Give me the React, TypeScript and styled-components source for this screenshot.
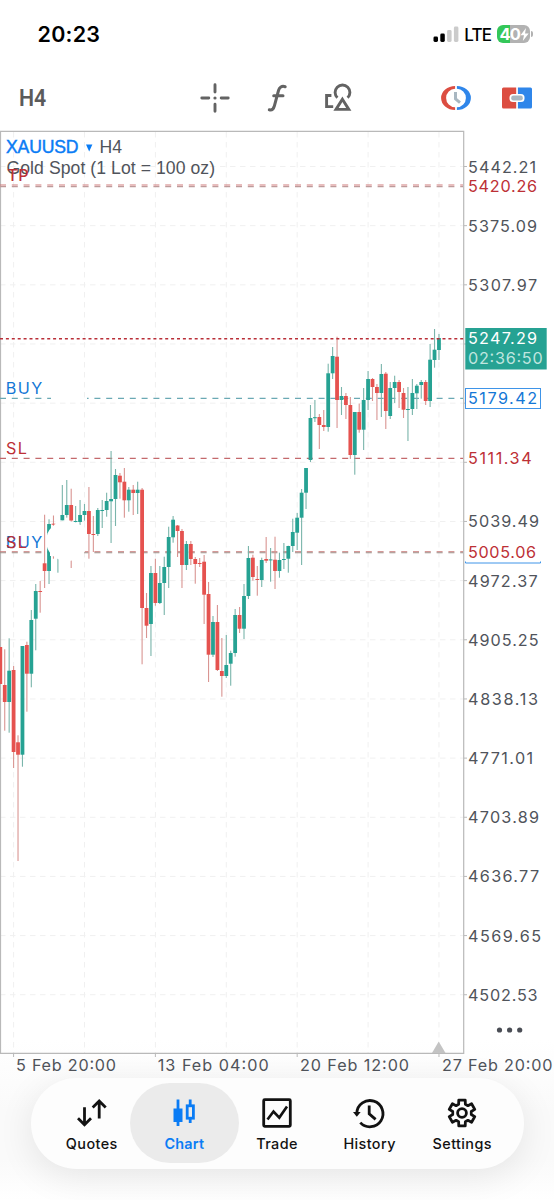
import React from "react";
import styled, { createGlobalStyle } from "styled-components";

const GlobalStyle = createGlobalStyle`
  * { box-sizing: border-box; }
  body { margin: 0; background: #fff; }
  #root { width: 554px; }
`;

const colors = {
  up: "#26a293",
  down: "#e5524f",
  upWick: "#7ab5ab",
  downWick: "#d99592",
  grid: "#f0f0f0",
  frame: "#b9b9b9",
  label: "#50545b",
  red: "#bd3036",
  blue: "#1377d6",
  accent: "#0a7cf5",
  icon: "#636363",
};

const Screen = styled.main`
  width: 554px;
  height: 1200px;
  display: flex;
  flex-direction: column;
  overflow: hidden;
  font-family: Inter, "Liberation Sans", sans-serif;
  background: linear-gradient(#fff 1040px, #fafafa 1110px, #fafafa 1160px, #fff 1200px);
`;

const StatusBar = styled.header`
  height: 68px;
  flex: none;
  display: flex;
  align-items: center;
  padding: 0 21px 0 37.5px;
`;

const Clock = styled.span`
  flex: 1;
  font-size: 21.5px;
  font-weight: 600;
  letter-spacing: 0.25px;
  color: #000;
`;

const Network = styled.span`
  font-size: 17px;
  font-weight: 500;
  letter-spacing: -0.9px;
  margin: 1px 6px 0 5px;
`;

const Battery = styled.div`
  position: relative;
  width: 33px;
  height: 18px;
  border-radius: 6px;
  background: linear-gradient(90deg, #34c759 40%, #b2b2b2 40%);
  display: flex;
  align-items: center;
  padding-left: 2.5px;
  margin-right: 3px;
  color: #fff;
  font-size: 16.5px;
  font-weight: 700;
  letter-spacing: -0.8px;

  &::after {
    content: "";
    position: absolute;
    right: -3px;
    top: 6px;
    width: 2px;
    height: 6px;
    border-radius: 0 2px 2px 0;
    background: #b2b2b2;
  }
`;

const Toolbar = styled.div`
  height: 62px;
  flex: none;
  display: flex;
  align-items: center;
  padding: 0 21px 3px 19px;
`;

const Timeframe = styled.span`
  width: 180px;
  font-family: Roboto, sans-serif;
  font-size: 24.5px;
  font-weight: 600;
  color: #5b5b5b;

  span {
    display: inline-block;
    transform: scaleX(0.87);
    transform-origin: left;
  }
`;

const ToolIcon = styled.svg<{ $gap?: string }>`
  width: 32px;
  height: 32px;
  flex: none;
  margin-left: ${(p) => p.$gap ?? "0"};
  fill: none;
  stroke: ${colors.icon};
`;

const ChartCanvas = styled.svg`
  display: block;
  flex: none;
  width: 554px;
  height: 948px;
`;

const TabBar = styled.nav`
  flex: none;
  height: 91px;
  margin: 0 30.5px;
  padding: 5px 6px;
  border-radius: 46px;
  background: #fdfdfd;
  box-shadow: 0 8px 36px rgba(0, 0, 0, 0.09);
  display: flex;
  justify-content: center;
`;

const Tab = styled.button<{ $active?: boolean }>`
  width: 109px;
  height: 80px;
  flex: none;
  margin: 0 -8.2px;
  padding: 13px 0 0;
  border: 0;
  border-radius: 40px;
  background: ${(p) => (p.$active ? "#ebebeb" : "transparent")};
  color: ${(p) => (p.$active ? colors.accent : "#121212")};
  display: flex;
  flex-direction: column;
  align-items: center;
  font: ${(p) => (p.$active ? 600 : 500)} 14.4px Inter, sans-serif;
  letter-spacing: ${(p) => (p.$active ? "0.2px" : "0.4px")};

  svg {
    width: 34px;
    height: 34px;
    margin-bottom: 5.4px;
    fill: none;
    stroke: currentColor;
    stroke-width: 2.8;
  }
`;

type Candle = [number, number, number, number, 0 | 1];

/* [high, body top, body bottom, low, rising], one entry every four hours */
const candles: Candle[] = [
  [647, 647, 684, 684, 0], [649.3, 685, 702, 730.7, 0], [638.3, 670.7, 702, 732.7, 1],
  [666, 670, 752, 768, 0], [735.3, 742.3, 754.7, 861, 0], [646, 646, 754.7, 766.7, 1],
  [641.7, 645, 673.7, 711.7, 0], [610, 620, 673.7, 687.3, 1], [584, 591, 618.7, 650.3, 1],
  [581, 591, 592, 612.7, 0], [514.7, 563.3, 571, 588, 0], [519.3, 524, 571, 584, 1],
  [515.5, 523.7, 524.7, 558.7, 0], [530, 535, 550, 572.7, 1], [485, 515, 520.3, 520.3, 1],
  [480, 505, 515, 517.6, 1], [488.7, 505, 520.5, 568, 0], [506, 521, 522, 522.5, 1],
  [500, 515, 522, 525, 1], [504, 511, 515, 520.7, 1], [487, 511, 534, 558.7, 0],
  [516, 534, 535, 552, 0], [508, 510, 534, 536, 1], [500, 510, 511, 528, 1],
  [492.7, 501, 510, 516.7, 1], [451, 499, 501.3, 543, 1], [469, 475, 499, 526, 1],
  [473, 475.7, 482.3, 498.7, 0], [468, 481.7, 500.3, 517.7, 0], [487, 489.7, 500.3, 511.7, 1],
  [485, 489.7, 493, 515, 0], [481.7, 489.7, 493, 514, 1], [488, 489.7, 608, 664.3, 0],
  [593, 608, 625.7, 638, 0], [566, 573, 624, 656, 1], [558.7, 573, 603, 605.7, 0],
  [566, 583, 603, 604, 1], [556.7, 567, 583, 615, 1], [526.7, 537, 567, 588, 1],
  [516, 519.7, 537.3, 542.7, 1], [525, 525.5, 531, 557, 0], [529, 531, 565, 588, 0],
  [541, 544, 565, 570, 1], [541, 544, 559, 565, 0], [557, 559, 564, 583.7, 0],
  [558, 563, 564, 567, 0], [555, 561.7, 594.7, 624, 0], [582, 594, 654.7, 682, 0],
  [616, 622, 654.7, 657, 1], [605, 622, 670, 671, 0], [638, 671, 676, 696.7, 0],
  [635, 665, 676, 678, 1], [650.7, 653, 663.7, 685.7, 1], [609, 615, 653, 656.7, 1],
  [607, 615, 628.7, 633, 0], [584, 596, 628.7, 639, 1], [546, 558, 596, 599, 1],
  [554.7, 557.7, 577, 580.7, 0], [566, 579, 580, 595.7, 0], [557.7, 560, 580, 587, 1],
  [537, 559, 560.7, 563, 0], [548, 559.4, 560.2, 581.7, 1], [536.7, 559.7, 571, 589, 0],
  [552.7, 560, 571, 577.7, 1], [543, 559, 560, 569, 1], [545.7, 546, 558.7, 572.7, 1],
  [518.7, 532, 546, 552, 1], [513, 517.7, 532.7, 550, 1], [489, 492.7, 517.7, 565, 1],
  [468, 468, 492.7, 509, 1], [405, 418, 460, 462, 1], [400, 417.2, 418.2, 422, 1],
  [414, 417, 425, 449, 0], [410, 425, 427, 431, 0], [363.7, 373.3, 427, 431.7, 1],
  [347, 356, 373.3, 379, 1], [336.7, 356.7, 400, 428, 0], [387, 396, 400, 415, 1],
  [393, 396, 405, 419, 0], [397, 405, 455, 459, 0], [412, 412, 455, 474.7, 1],
  [403.5, 412, 429.7, 432.7, 0], [388, 400, 429.7, 450, 1], [371, 379, 400, 410, 1],
  [378, 379, 387, 401, 0], [384, 387, 393, 420, 0], [364, 374, 393, 417, 1],
  [372, 373.7, 411, 429, 0], [382, 388, 416, 419, 1], [375.7, 382, 388, 403, 1],
  [380, 382, 392, 408, 0], [388, 393, 409.7, 418, 0], [387, 409, 410, 441, 1],
  [379, 393, 409, 415, 1], [384, 385.7, 393.3, 409, 1], [380, 382, 385, 398.7, 1],
  [380, 382, 401, 405, 0], [344, 359.7, 401, 407, 1], [329, 349.7, 360, 367.7, 1],
  [334, 338, 350, 360, 1],
];

const candleX = (i: number) => 0.3 + i * 4.431;

const gridX = [3, 19, 35, 51, 67, 83, 99].map(candleX);
const gridY = Array.from({ length: 15 }, (_, i) => 166.5 + i * 59.16);

interface PriceLabel {
  text: string;
  y: number;
  width: number;
  color?: string;
}

const priceLabels: PriceLabel[] = [
  { text: "5442.21", y: 166.8, width: 67.5 },
  { text: "5420.26", y: 186, width: 68.5, color: colors.red },
  { text: "5375.09", y: 225.7, width: 68.5 },
  { text: "5307.97", y: 284.8, width: 68.5 },
  { text: "5247.29", y: 338.5, width: 68.5, color: "#fff" },
  { text: "02:36:50", y: 358, width: 74, color: "#bfe5df" },
  { text: "5179.42", y: 398.4, width: 68.5, color: colors.blue },
  { text: "5111.34", y: 458.3, width: 63, color: colors.red },
  { text: "5039.49", y: 521.5, width: 70.5 },
  { text: "5005.06", y: 552.2, width: 67.5, color: colors.red },
  { text: "4972.37", y: 580.6, width: 69 },
  { text: "4905.25", y: 639.8, width: 70 },
  { text: "4838.13", y: 699, width: 69.5 },
  { text: "4771.01", y: 758, width: 64.5 },
  { text: "4703.89", y: 817.2, width: 70.5 },
  { text: "4636.77", y: 876.4, width: 70.5 },
  { text: "4569.65", y: 935.6, width: 72.5 },
  { text: "4502.53", y: 994.7, width: 69 },
];

const timeLabels = [
  { text: "5 Feb 20:00", x: 16, width: 100 },
  { text: "13 Feb 04:00", x: 157.7, width: 111 },
  { text: "20 Feb 12:00", x: 300, width: 109 },
  { text: "27 Feb 20:00", x: 442, width: 110.5 },
];

const AxisText = styled.text`
  font: 400 16.2px Inter, sans-serif;
  fill: ${colors.label};
`;

const TitleText = styled.text`
  font-family: "Liberation Sans", Arial, sans-serif;
  font-size: 17.6px;
  fill: ${colors.label};
`;

function CandleShape({ data, x }: { data: Candle; x: number }) {
  const [high, top, bottom, low, rising] = data;
  return (
    <g>
      <rect x={x - 0.55} y={high} width={1.1} height={low - high} fill={rising ? colors.upWick : colors.downWick} />
      <rect x={x - 1.9} y={top} width={3.8} height={Math.max(bottom - top, 1)} fill={rising ? colors.up : colors.down} />
    </g>
  );
}

function Chart() {
  return (
    <ChartCanvas viewBox="0 130 554 948">
      <g stroke={colors.grid} strokeWidth={1} strokeDasharray="5.5 4.5">
        {gridY.map((y) => <line key={y} x1={0} x2={463} y1={y} y2={y} />)}
        {gridX.map((x) => <line key={x} x1={x} x2={x} y1={132} y2={1053} />)}
      </g>

      <path d="M0.5 1053V131.3H463.7V1053.3H0" fill="none" stroke={colors.frame} strokeWidth={1.2} />
      <g stroke={colors.frame}>
        {gridY.map((y) => <line key={y} x1={464} x2={467} y1={y} y2={y} />)}
        {gridX.filter((_, i) => i % 2 === 0).map((x) => <line key={x} x1={x} x2={x} y1={1053} y2={1057} />)}
      </g>

      <g fill="none" strokeDasharray="6 5.8">
        <path d="M0 185H463" stroke="#cf7c7c" strokeWidth={1.2} />
        <path d="M0 186.7H463" stroke="#bd9a9a" strokeWidth={1.2} />
        <path d="M0 398.4H51" stroke="#6aa9b4" strokeWidth={1.1} />
        <path d="M87 398.4H463" stroke="#6aa9b4" strokeWidth={1.1} strokeDashoffset={4.4} />
        <path d="M0 458.4H463" stroke="#c4696c" strokeWidth={1.1} />
        <path d="M0 551.8H463" stroke="#c77877" strokeWidth={1.1} />
        <path d="M0 552.8H463" stroke="#a08f89" strokeWidth={1.1} />
      </g>

      {candles.map((c, i) => <CandleShape key={i} data={c} x={candleX(i)} />)}
      <ellipse cx={67} cy={541} rx={21} ry={20} fill="#fff" />
      <path d="M50 541H84V556H50Z" fill="#fff" />
      <path d="M0 338.7H464" stroke="#b92f38" strokeWidth={1.6} strokeDasharray="3 2.9" />

      <path d="M438.7 1041.5L445.5 1053H432Z" fill="#c3c3c3" />

      <TitleText x={6} y={152.5} textLength={72.5} style={{ fill: "#0a7cf5" }} stroke="#0a7cf5" strokeWidth={0.45}>XAUUSD</TitleText>
      <path d="M86 144.6H92.4L89.2 151.6Z" fill="#0a7cf5" />
      <TitleText x={99.5} y={152.5} textLength={22.5}>H4</TitleText>
      <TitleText x={6.5} y={174.3} textLength={208.5}>Gold Spot (1 Lot = 100 oz)</TitleText>
      <AxisText x={7.2} y={181} textLength={21.5} style={{ fill: colors.red, fontWeight: 500 }}>TP</AxisText>
      <AxisText x={5.8} y={393.7} textLength={36.5} style={{ fill: colors.blue }}>BUY</AxisText>
      <AxisText x={6} y={454} textLength={21} style={{ fill: colors.red }}>SL</AxisText>
      <AxisText x={5.8} y={548.3} textLength={36.5} style={{ fill: colors.blue }}>BUY</AxisText>
      <AxisText x={6} y={548.3} textLength={21} style={{ fill: colors.red }}>SL</AxisText>

      <rect x={465.3} y={328} width={81.4} height={41.5} fill={colors.up} />
      <rect x={465.5} y={388.5} width={75} height={20} fill="#fff" stroke="#3e94e8" />
      <path d="M465.5 561.5V563H540.5V561.5" fill="none" stroke="#3e94e8" />
      {priceLabels.map((l) => (
        <AxisText key={l.text} x={468} y={l.y + 5.9} textLength={l.width + 0.6} style={{ fill: l.color }}>{l.text}</AxisText>
      ))}
      {timeLabels.map((l) => (
        <AxisText key={l.text} x={l.x} y={1071.2} textLength={l.width}>{l.text}</AxisText>
      ))}
      <g fill="#4a4d55">
        <circle cx={499.5} cy={1030} r={2.6} />
        <circle cx={509.6} cy={1030} r={2.6} />
        <circle cx={519.7} cy={1030} r={2.6} />
      </g>
    </ChartCanvas>
  );
}

const gearPath = (() => {
  const points: string[] = [];
  for (let k = 0; k < 6; k++) {
    const base = -90 + k * 60;
    [[-21, 9.4], [-14, 13.3], [14, 13.3], [21, 9.4]].forEach(([offset, r]) => {
      const a = ((base + offset) * Math.PI) / 180;
      points.push(`${(r * Math.cos(a)).toFixed(2)} ${(r * Math.sin(a)).toFixed(2)}`);
    });
  }
  return `M${points.join("L")}Z`;
})();

export default function App() {
  return (
    <Screen>
      <GlobalStyle />
      <StatusBar>
        <Clock>20:23</Clock>
        <svg width="26" height="18" viewBox="0 0 26 18">
          <rect x="0.5" y="11.5" width="4.5" height="5.5" rx="1.4" fill="#000" />
          <rect x="7.3" y="8.5" width="4.5" height="8.5" rx="1.4" fill="#000" />
          <rect x="14.1" y="5" width="4.5" height="12" rx="1.4" fill="#cbcbcb" />
          <rect x="20.9" y="1.5" width="4.5" height="15.5" rx="1.4" fill="#cbcbcb" />
        </svg>
        <Network>LTE</Network>
        <Battery>
          40
          <svg width="9" height="13" viewBox="0 0 9 13">
            <path d="M6 0L0.5 7.3H4L2.8 13L8.7 5.4H5Z" fill="#fff" />
          </svg>
        </Battery>
      </StatusBar>

      <Toolbar>
        <Timeframe><span>H4</span></Timeframe>
        <ToolIcon viewBox="-16 -16 32 32" strokeWidth={2.9} strokeLinecap="round">
          <path d="M0-13.2V-6M0 6.2V13.2M-13.2 0H-6.2M6.2 0H13.2" />
          <circle r={1.6} fill={colors.icon} stroke="none" />
        </ToolIcon>
        <ToolIcon $gap="30px" viewBox="-16 -16 32 32" strokeWidth={3} strokeLinecap="round" strokeLinejoin="round">
          <path d="M8.2-11.3C4.6-12.4 2.4-10.8 1.5-7.5L-2.6 7.8C-3.6 11.4-5 12.4-7.7 11.8M-3.3-2.2H6" />
        </ToolIcon>
        <ToolIcon $gap="29px" viewBox="-16 -16 32 32" strokeWidth={2.9}>
          <path d="M-0.6-0.2A7.4 7.4 0 1 1 9.6-0.2" />
          <path d="M4.4 1.2L10.8 11.4H-2Z" />
          <path d="M-6.6-2.5H-11.4V8.6H-4.8" />
        </ToolIcon>
        <ToolIcon $gap="auto" viewBox="-16 -16 32 32" stroke="none">
          <path d="M-0.9-12A14 12 0 0 0-0.9 12V9.3A9 9.3 0 0 1-0.9-9.3Z" fill="#dc4d41" stroke="none" />
          <path d="M0.9-12A14 12 0 0 1 0.9 12V9.3A9 9.3 0 0 0 0.9-9.3Z" fill="#2f86ea" stroke="none" />
          <path d="M-0.5-6V0.8L4 4.6" stroke="#a9b7c1" strokeWidth={3} />
        </ToolIcon>
        <ToolIcon $gap="29px" viewBox="-16 -16 32 32">
          <g stroke="none">
            <path d="M-13.5-10.5H-0.8V10.5H-13.5A1.5 1.5 0 0 1-15 9V-9A1.5 1.5 0 0 1-13.5-10.5Z" fill="#dc4d41" />
            <path d="M0.9-10.5H13.5A1.5 1.5 0 0 1 15-9V9A1.5 1.5 0 0 1 13.5 10.5H0.9Z" fill="#2f86ea" />
            <rect x={-7.5} y={-4} width={15} height={8} rx={3.5} fill="#fff" />
            <rect x={-5.8} y={-2.5} width={11.6} height={5} rx={2.2} fill="#a9b7c1" />
          </g>
        </ToolIcon>
      </Toolbar>

      <Chart />

      <TabBar>
        <Tab>
          <svg viewBox="-16.4 -17 34 34">
            <path d="M-6.9-5.7V11.5M-13.4 5.3L-6.9 11.8L-0.4 5.3M7.8 5.5V-11.7M1.3-5.5L7.8-12L14.3-5.5" />
          </svg>
          Quotes
        </Tab>
        <Tab $active>
          <svg viewBox="-17 -17 34 34">
            <path d="M-6-13.5V13M6.2-13.5V-7M6.2 5V10" />
            <rect x={-10.5} y={-4.5} width={9} height={13.5} fill="currentColor" stroke="none" />
            <rect x={3.2} y={-7.2} width={6.2} height={12.4} />
          </svg>
          Chart
        </Tab>
        <Tab>
          <svg viewBox="-17 -17 34 34">
            <rect x={-13.3} y={-13.3} width={26.6} height={26.6} rx={1} />
            <path d="M-9.5 6.5L-3.5-1.5L2.3 4.6L10-6.5" strokeWidth={2.6} />
          </svg>
          Trade
        </Tab>
        <Tab>
          <svg viewBox="-16.2 -17 34 34">
            <path d="M-12.4 0A13.1 13.1 0 1 1-8.9 9.6" />
            <path d="M-16.2-1H-8.5L-12.4 3.8Z" fill="currentColor" stroke="none" />
            <path d="M0-7.5V0.8L6.4 6.4" />
          </svg>
          History
        </Tab>
        <Tab>
          <svg viewBox="-17 -17 34 34">
            <path d={gearPath} strokeLinejoin="round" />
            <circle r={4.4} />
          </svg>
          Settings
        </Tab>
      </TabBar>
    </Screen>
  );
}
